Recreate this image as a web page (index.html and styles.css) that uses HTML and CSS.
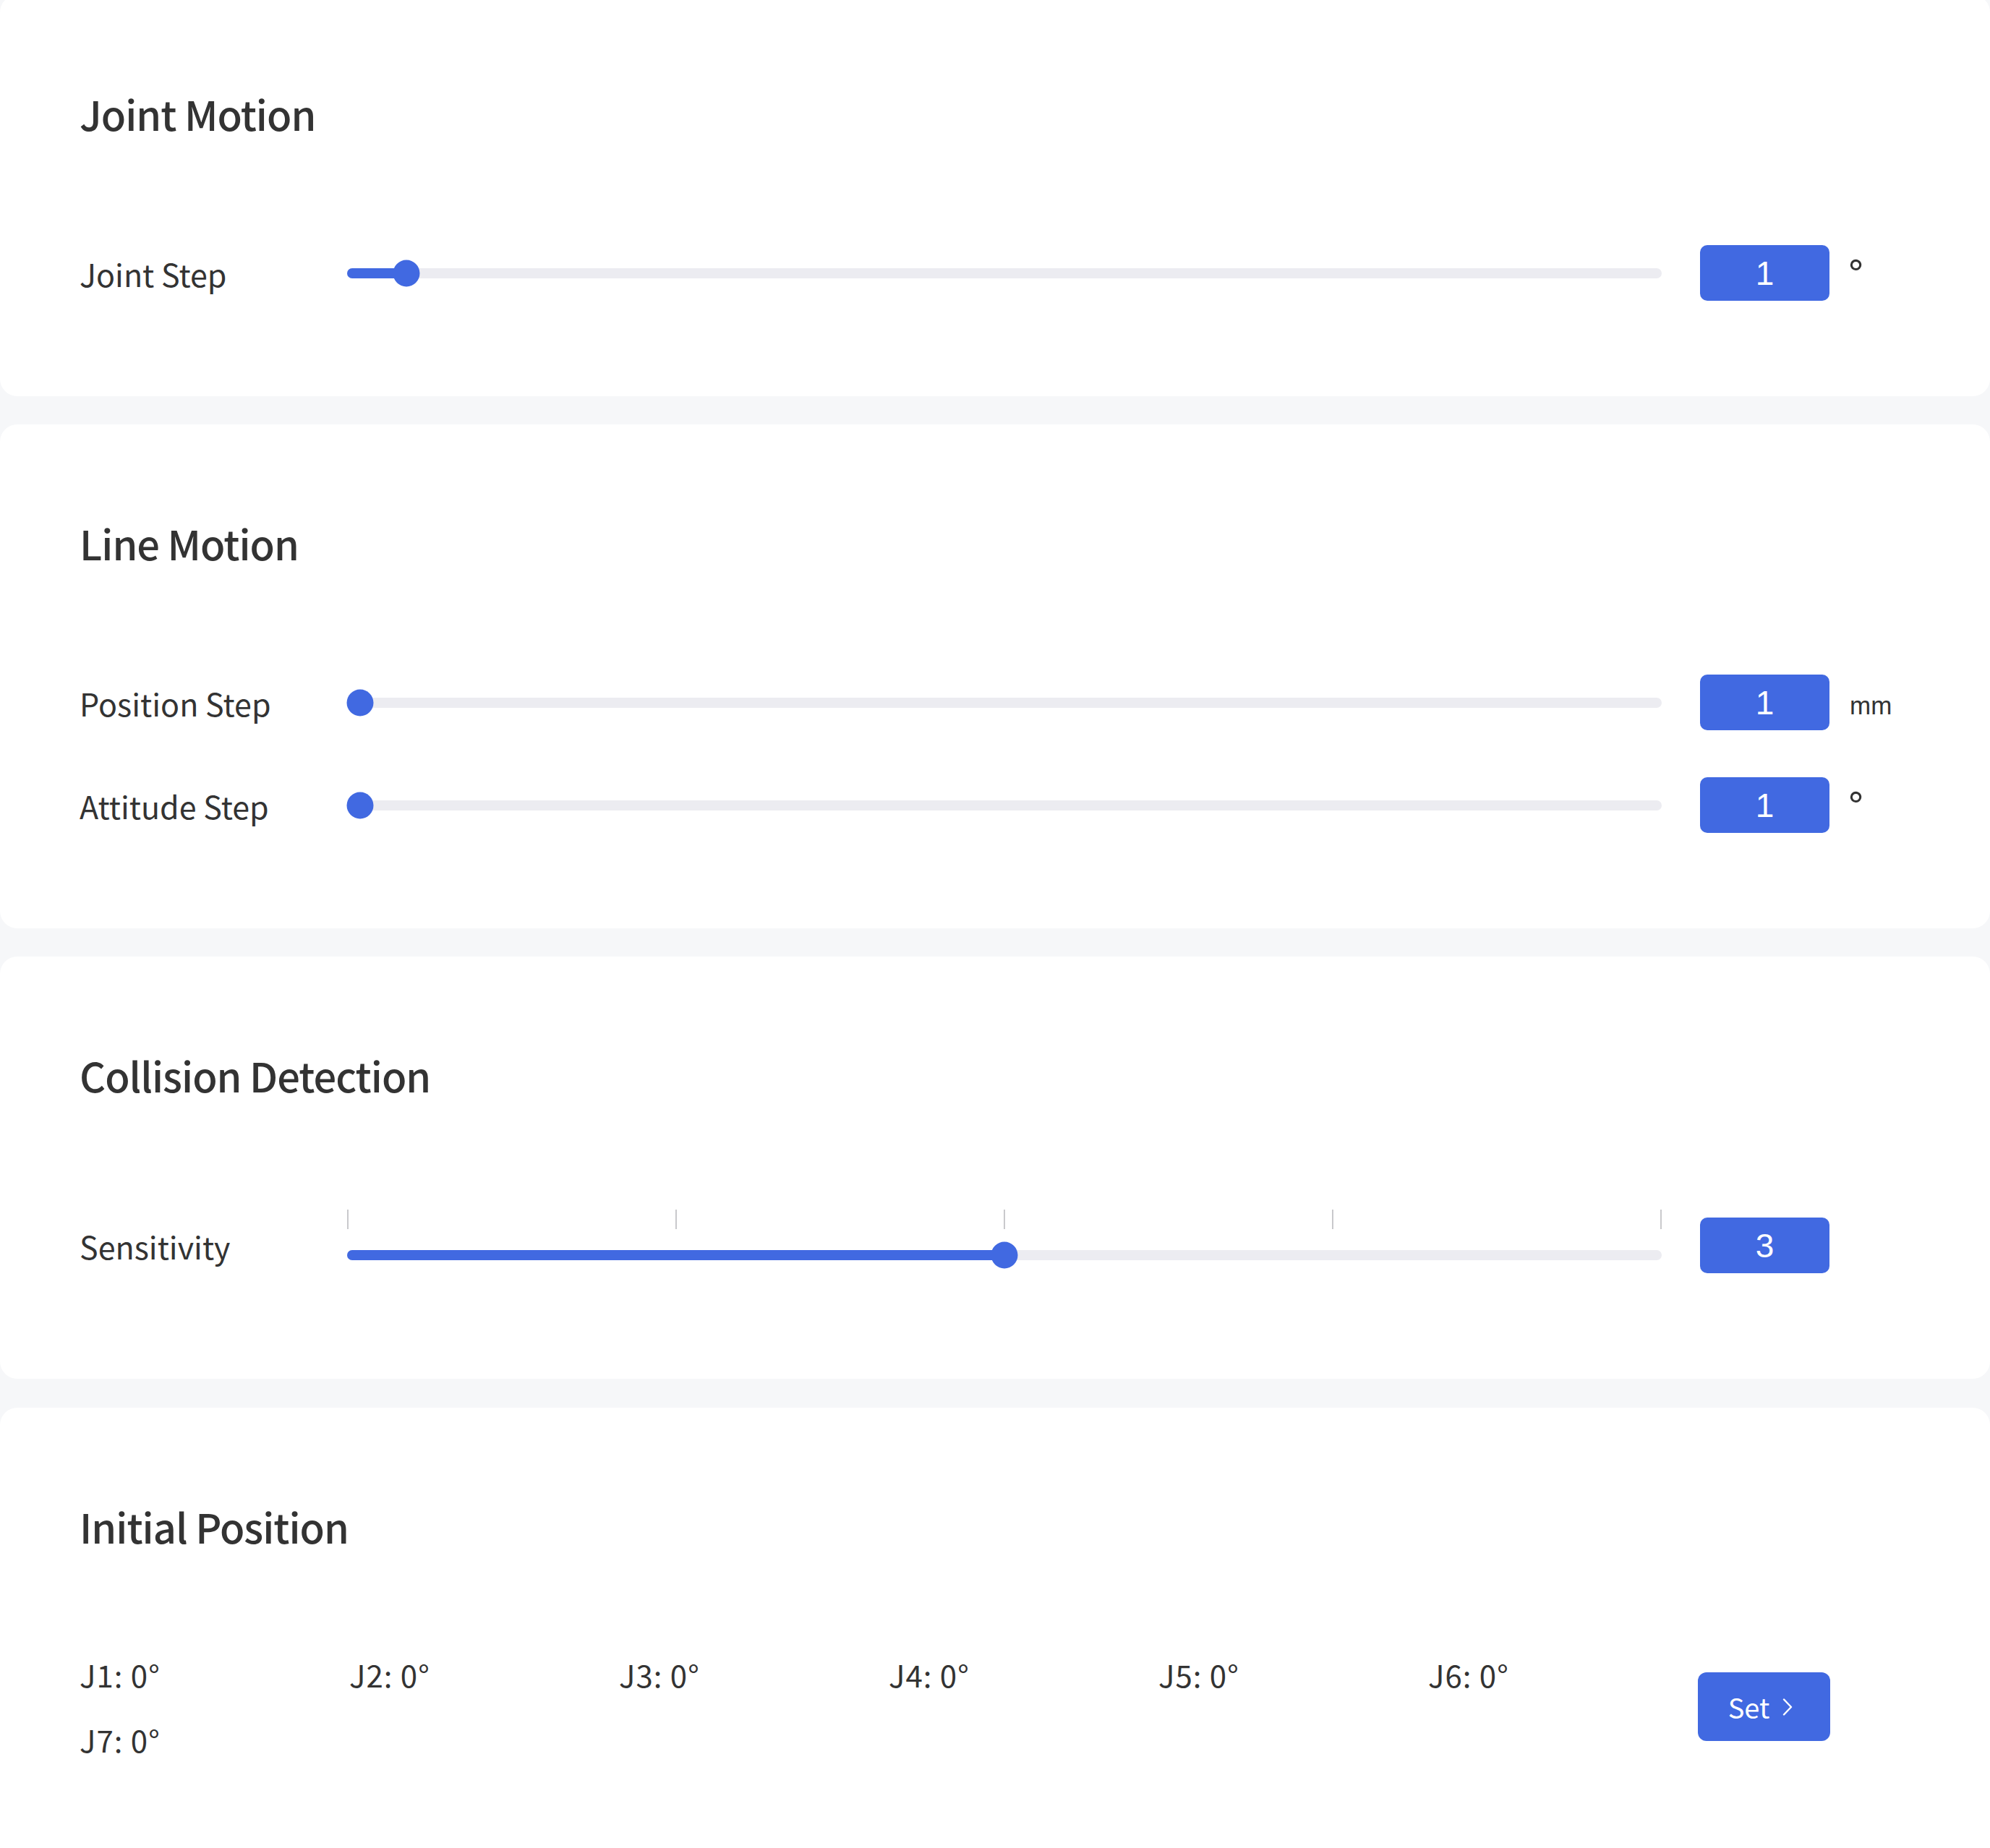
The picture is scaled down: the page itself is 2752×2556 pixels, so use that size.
FILE: index.html
```html
<!DOCTYPE html>
<html lang="en">
<head>
<meta charset="utf-8">
<title>Motion Settings</title>
<link rel="stylesheet" href="styles.css">
</head>
<body>
<div class="page">
  <section class="card">
    <h2 class="card-title">Joint Motion</h2>
    <div class="rows">
      <div class="row">
        <span class="row-label">Joint Step</span>
        <div class="slider">
          <div class="rail">
            <div class="fill" style="width:4.5%"></div>
            <div class="handle" style="left:4.5%"></div>
          </div>
        </div>
        <div class="value-box">1</div>
        <span class="unit unit-deg">°</span>
      </div>
    </div>
  </section>

  <section class="card">
    <h2 class="card-title">Line Motion</h2>
    <div class="rows">
      <div class="row">
        <span class="row-label">Position Step</span>
        <div class="slider">
          <div class="rail">
            <div class="fill" style="width:1%"></div>
            <div class="handle" style="left:1%"></div>
          </div>
        </div>
        <div class="value-box">1</div>
        <span class="unit">mm</span>
      </div>
      <div class="row">
        <span class="row-label">Attitude Step</span>
        <div class="slider">
          <div class="rail">
            <div class="fill" style="width:1%"></div>
            <div class="handle" style="left:1%"></div>
          </div>
        </div>
        <div class="value-box">1</div>
        <span class="unit unit-deg">°</span>
      </div>
    </div>
  </section>

  <section class="card card-marks">
    <h2 class="card-title">Collision Detection</h2>
    <div class="rows">
      <div class="row row-marks">
        <span class="row-label">Sensitivity</span>
        <div class="slider-marked">
          <div class="marks">
            <span class="tick"></span><span class="tick"></span><span class="tick"></span><span class="tick"></span><span class="tick"></span>
          </div>
          <div class="slider">
            <div class="rail">
              <div class="fill" style="width:50%"></div>
              <div class="handle" style="left:50%"></div>
            </div>
          </div>
        </div>
        <div class="value-box">3</div>
      </div>
    </div>
  </section>

  <section class="card card-last">
    <h2 class="card-title">Initial Position</h2>
    <div class="joints-row">
      <div class="joints">
        <span class="joint">J1: 0°</span>
        <span class="joint">J2: 0°</span>
        <span class="joint">J3: 0°</span>
        <span class="joint">J4: 0°</span>
        <span class="joint">J5: 0°</span>
        <span class="joint">J6: 0°</span>
        <span class="joint">J7: 0°</span>
      </div>
      <button class="set-btn" type="button">Set
        <svg class="chev" width="14" height="24" viewBox="0 0 14 24" aria-hidden="true"><path d="M2 1.5 L12 12 L2 22.5" fill="none" stroke="#fff" stroke-width="2.4" stroke-linecap="round" stroke-linejoin="round"/></svg>
      </button>
    </div>
  </section>
</div>
</body>
</html>
```

FILE: styles.css
```css
* { box-sizing: border-box; }

html, body {
  margin: 0;
  padding: 0;
  background: #f6f7f9;
}

body {
  font-family: "Noto Sans CJK SC", "Noto Sans", sans-serif;
  color: #333333;
  overflow: hidden;
}

.page {
  margin-top: -7px;
  display: flex;
  flex-direction: column;
  gap: 39.5px;
}

.card {
  background: #ffffff;
  border-radius: 24px;
  padding: 136px 0 131.5px 110px;
}

.card-title {
  margin: 0;
  font-size: 56px;
  line-height: 56px;
  font-weight: 500;
  letter-spacing: -1px;
  color: #333333;
}

.rows {
  margin-top: 154px;
  display: flex;
  flex-direction: column;
  gap: 65px;
}

.row {
  display: flex;
  align-items: center;
  height: 77px;
}

.row-label {
  width: 370px;
  flex-shrink: 0;
  font-size: 43px;
  line-height: 60px;
  color: #333333;
}

.slider {
  position: relative;
  width: 1818px;
  height: 37px;
  flex-shrink: 0;
  display: flex;
  align-items: center;
}

.rail {
  position: relative;
  width: 100%;
  height: 14px;
  border-radius: 7px;
  background: #ececf1;
}

.fill {
  position: absolute;
  left: 0;
  top: 0;
  bottom: 0;
  border-radius: 7px;
  background: #4169e1;
}

.handle {
  position: absolute;
  top: 50%;
  width: 37px;
  height: 37px;
  border-radius: 50%;
  background: #4169e1;
  transform: translate(-50%, -50%);
}

.value-box {
  margin-left: 53px;
  width: 179px;
  height: 77px;
  flex-shrink: 0;
  border-radius: 10px;
  background: #4169e1;
  color: #ffffff;
  font-family: "Liberation Sans", Arial, sans-serif;
  font-size: 46px;
  display: flex;
  align-items: center;
  justify-content: center;
}

.unit {
  margin-left: 28px;
  font-family: "Liberation Sans", Arial, sans-serif;
  font-size: 35px;
  line-height: 40px;
  color: #333333;
  padding-top: 8px;
}

.unit-deg {
  font-family: "DejaVu Sans", sans-serif;
  font-size: 50px;
  line-height: 50px;
  padding-top: 0;
  margin-left: 24px;
  margin-bottom: -2px;
}

/* Collision detection card with marks */
.card-marks {
  padding-bottom: 135px;
}

.card-marks .rows {
  margin-top: 158px;
}

.row-marks {
  height: 99px;
}

.slider-marked {
  width: 1818px;
  height: 99px;
  flex-shrink: 0;
  display: flex;
  flex-direction: column;
}

.marks {
  height: 27px;
  display: flex;
  justify-content: space-between;
}

.tick {
  width: 2px;
  height: 27px;
  background: #c9c9cc;
}

.slider-marked .slider {
  margin-top: 17px;
  height: 38px;
}

/* Initial position */
.card-last {
  padding-bottom: 160px;
}

.joints-row {
  margin-top: 147px;
  display: flex;
  align-items: center;
  height: 150px;
}

.joints {
  display: grid;
  grid-template-columns: repeat(6, 373px);
  grid-auto-rows: 60px;
  row-gap: 30px;
  flex-shrink: 0;
}

.joint {
  font-size: 42px;
  line-height: 60px;
  letter-spacing: 1px;
  color: #333333;
}

.set-btn {
  width: 183px;
  height: 95px;
  flex-shrink: 0;
  border: none;
  border-radius: 12px;
  background: #4169e1;
  color: #ffffff;
  font-family: "Noto Sans CJK SC", "Noto Sans", sans-serif;
  font-size: 38px;
  display: flex;
  align-items: center;
  justify-content: center;
  gap: 18px;
  padding: 0 10px 0 0;
}

.chev {
  display: block;
}
```
